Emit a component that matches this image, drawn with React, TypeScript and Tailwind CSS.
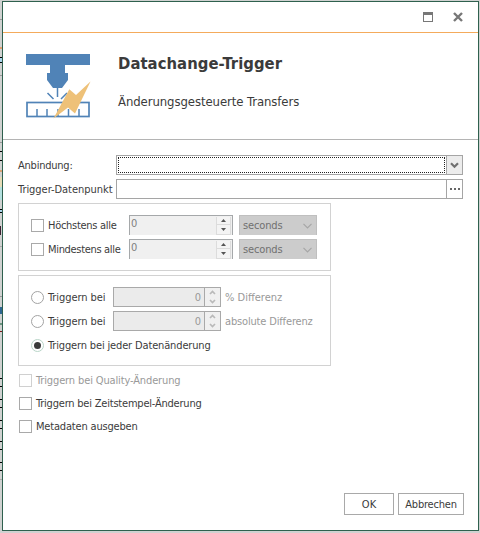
import type { ReactNode } from "react";

// Slices of the application behind the dialog, from top to bottom.
const backdrop = [
  "mt-[19px] h-px bg-[#999]",
  "mt-[27px] h-[2px] bg-[#e0a070]",
  "mt-[8px] h-px bg-black",
  "h-[4px] bg-[#a8d4ea]",
  "h-px bg-black",
  "mt-[12px] h-px bg-[#999]",
  "mt-[66px] h-px bg-[#999]",
  "mt-[8px] h-px bg-black",
  "mt-[8px] h-px bg-black",
  "mt-[9px] h-[2px] bg-[#dba274]",
  "mt-[5px] h-[10px] bg-[#e6dcb8]",
  "h-[13px] bg-[#b4e0df]",
  "mt-[9px] h-px bg-black",
  "h-[2px] bg-[#a8d4ea]",
  "h-px bg-black",
  "mt-[13px] h-[9px] w-px bg-[#3a2030]",
  "mt-[11px] h-px bg-[#aaa]",
  "mt-[49px] h-px bg-[#999]",
  "mt-[10px] h-[7px] bg-[#2f6791]",
  "mt-[9px] h-[2px] bg-[#6b9380]",
  "mt-[6px] h-px bg-[#7c1a1a]",
  "mt-[46px] h-px bg-black",
  "mt-[7px] h-px bg-black",
  "mt-[12px] h-px bg-black",
  "mt-[7px] h-px bg-black",
  "mt-[12px] h-px bg-black",
  "mt-[7px] h-px bg-black",
  "mt-[12px] h-px bg-black",
  "mt-[7px] h-px bg-black",
  "mt-[12px] h-px bg-black",
  "mt-[7px] h-px bg-black",
  "mt-[8px] h-px bg-[#aaa]",
];

function HeaderIcon() {
  return (
    <svg width="66" height="66" viewBox="0 0 66 66" fill="none">
      <path d="M1 1h64v11H1z" fill="#5083b7" />
      <path d="M25 11h15v9h3v7l-6 8h-9l-6-8v-7h3z" fill="#5083b7" />
      <path d="M32.500 35v9M22.500 40l6 6M42 40l-6 6" stroke="#5083b7" strokeWidth="1.500" />
      <rect x="2" y="49.500" width="62" height="14" stroke="#5083b7" strokeWidth="1.700" />
      <path d="M12 56v7M22 56v7M33 56v7M43.500 56v7M54 56v7" stroke="#5083b7" strokeWidth="1.500" />
      <path d="M65.500 28.500 50 60.500 43 54.500 28.500 65.500 44.300 36.300 51 42z" fill="#eec178" />
    </svg>
  );
}

function Check({ off = false }: { off?: boolean }) {
  return (
    <span className={off ? "size-[13px] shrink-0 border border-[#d0d0d0]" : "size-[13px] shrink-0 border border-[#a9a9a9]"} />
  );
}

function Radio({ on = false }: { on?: boolean }) {
  return (
    <span
      className={
        on
          ? "flex size-[13px] shrink-0 items-center justify-center rounded-full border border-[#b9d5c8]"
          : "size-[13px] shrink-0 rounded-full border border-[#a3a3a3]"
      }
    >
      {on && <span className="size-[7px] rounded-full bg-[#3b3b3b]" />}
    </span>
  );
}

function LimitRow({ label }: { label: ReactNode }) {
  return (
    <div className="flex h-5 items-center">
      <Check />
      <span className="ml-1 w-[81px]">{label}</span>
      <div className="flex h-5 w-[104px] justify-between border border-b-0 border-[#a5a8aa] bg-[#f0f0f0] text-[#808080]">
        <span className="pl-px leading-[16px]">0</span>
        <div className="mr-px mt-px flex w-[15px] flex-col border border-t-0 border-[#dcdcdc] bg-[#f4f4f4]">
          <span className="flex h-[8px] items-center justify-center border-b border-[#dcdcdc]">
            <svg width="5" height="3" viewBox="0 0 5 3"><path d="M0 3 2.500 0 5 3z" fill="#555" /></svg>
          </span>
          <span className="flex h-[8px] items-center justify-center">
            <svg width="5" height="3" viewBox="0 0 5 3"><path d="M0 0h5L2.500 3z" fill="#555" /></svg>
          </span>
        </div>
      </div>
      <div className="ml-[6px] flex h-5 w-[78px] items-center justify-between border border-b-0 border-[#bfbfbf] bg-[#cccccc] pl-[3px] pr-1 text-[#707070]">
        <span className="tracking-[-0.14px]">seconds</span>
        <svg width="9" height="6" viewBox="0 0 9 6" fill="none"><path d="m.5.8 4 4 4-4" stroke="#a6a6a6" strokeWidth="1.200" /></svg>
      </div>
    </div>
  );
}

function DiffRow({ unit }: { unit: ReactNode }) {
  return (
    <div className="flex h-5 items-center">
      <Radio />
      <span className="ml-1 w-[65px] tracking-[-0.07px]">Triggern bei</span>
      <div className="flex h-5 w-[108px] border border-[#a9a9a9] bg-[#ebebeb] text-[#999]">
        <span className="flex-1 pr-[3px] text-right leading-[19px]">0</span>
        <div className="flex w-4 flex-col items-center justify-center gap-[4px] border-l border-[#a9a9a9] bg-[#f0f0f0]">
          <svg width="7" height="5" viewBox="0 0 7 5" fill="none"><path d="m1 4 2.500-2.500L6 4" stroke="#b9b9b9" strokeWidth="1.700" /></svg>
          <svg width="7" height="5" viewBox="0 0 7 5" fill="none"><path d="m1 1 2.500 2.500L6 1" stroke="#b9b9b9" strokeWidth="1.700" /></svg>
        </div>
      </div>
      <span className="ml-1 text-[#999]">{unit}</span>
    </div>
  );
}

export default function App() {
  return (
    <div className="relative h-[533px] w-[480px] overflow-hidden bg-[#d0d2d1] font-['DejaVu_Sans_Condensed','DejaVu_Sans',sans-serif] text-[11px] leading-[13px] text-[#3b3b3b] whitespace-nowrap">
      <div className="flex w-[2px] flex-col">
        {backdrop.map((c, i) => (
          <span key={i} className={"shrink-0 " + c} />
        ))}
      </div>
      <div className="absolute left-[2px] top-px flex h-[530px] w-[477px] flex-col border border-[#2f604e] bg-white">
        <div className="flex h-[31px] shrink-0 items-center justify-end gap-5 border-b border-[#f4ab5c] pr-[15px]">
          <span className="size-[10px] border border-t-[3px] border-[#777]" />
          <svg width="10" height="10" viewBox="0 0 10 10"><path d="m1 1 8 8M9 1 1 9" stroke="#777" strokeWidth="2.400" /></svg>
        </div>
        <div className="flex h-[107px] shrink-0 border-b border-[#b4b4b4] pl-[22px] pt-5">
          <HeaderIcon />
          <div className="ml-[27px] flex flex-col pt-px">
            <h1 className="text-[16.5px] font-bold leading-5 tracking-[0.05px]">Datachange-Trigger</h1>
            <p className="mt-[20px] text-[13px] leading-4 tracking-[-0.08px]">Änderungsgesteuerte Transfers</p>
          </div>
        </div>
        <div className="flex flex-1 flex-col px-[15px] pt-[15px]">
          <div className="flex h-5 items-center">
            <span className="w-[98px] tracking-[-0.23px]">Anbindung:</span>
            <div className="flex h-5 flex-1 border border-[#a5a5a5]">
              <span className="m-px flex-1 border border-dotted border-[#222]" />
              <span className="flex w-4 items-center justify-center border-l border-[#a5a5a5] bg-[#ececec]">
                <svg width="9" height="7" viewBox="0 0 9 7" fill="none"><path d="m1 1.200 3.500 3.500L8 1.200" stroke="#707070" strokeWidth="2.200" /></svg>
              </span>
            </div>
          </div>
          <div className="mt-1 flex h-5 items-center">
            <span className="w-[98px] tracking-[-0.04px]">Trigger-Datenpunkt</span>
            <div className="flex h-5 flex-1 justify-end border border-[#a5a5a5]">
              <span className="flex w-4 items-center justify-center gap-[2px] border-l border-[#a5a5a5]">
                <i className="size-[2px] bg-[#666]" />
                <i className="size-[2px] bg-[#666]" />
                <i className="size-[2px] bg-[#666]" />
              </span>
            </div>
          </div>
          <div className="mt-1 flex h-[68px] w-[313px] flex-col gap-1 border border-[#d2d2d2] pl-3 pt-[11px]">
            <LimitRow label={<span className="tracking-[-0.29px]">Höchstens alle</span>} />
            <LimitRow label={<span className="tracking-[-0.32px]">Mindestens alle</span>} />
          </div>
          <div className="mt-1 flex h-[91px] w-[313px] flex-col gap-1 border border-[#d2d2d2] pl-3 pt-[11px]">
            <DiffRow unit={<span>% Differenz</span>} />
            <DiffRow unit={<span className="tracking-[-0.16px]">absolute Differenz</span>} />
            <div className="flex h-5 items-center">
              <Radio on />
              <span className="ml-1 tracking-[-0.15px]">Triggern bei jeder Datenänderung</span>
            </div>
          </div>
          <div className="mt-2 flex flex-col gap-[10px] pl-px">
            <div className="flex h-[13px] items-center gap-1 text-[#999]">
              <Check off />
              <span className="tracking-[-0.13px]">Triggern bei Quality-Änderung</span>
            </div>
            <div className="flex h-[13px] items-center gap-1">
              <Check />
              <span className="tracking-[-0.21px]">Triggern bei Zeitstempel-Änderung</span>
            </div>
            <div className="flex h-[13px] items-center gap-1">
              <Check />
              <span className="tracking-[-0.18px]">Metadaten ausgeben</span>
            </div>
          </div>
          <div className="mb-[15px] mt-auto flex justify-end gap-1">
            <span className="flex h-[22px] w-[50px] items-center justify-center border border-[#a9a9a9]">OK</span>
            <span className="-mr-px flex h-[22px] w-[66px] items-center justify-center border border-[#a9a9a9] tracking-[-0.2px]">Abbrechen</span>
          </div>
        </div>
      </div>
    </div>
  );
}
